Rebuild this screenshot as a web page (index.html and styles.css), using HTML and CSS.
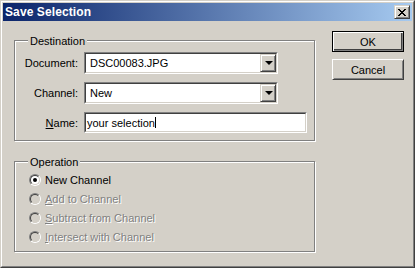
FILE: index.html
```html
<!DOCTYPE html>
<html lang="en">
<head>
    <meta charset="UTF-8">
    <title>Save Selection</title>
    <link rel="stylesheet" href="styles.css">
</head>
<body>
    <div class="window">
        <div class="frame">
            <div class="titlebar">
                <span class="title">Save Selection</span>
                <span class="close-btn">
                    <svg width="8" height="7" viewBox="0 0 8 7">
                        <path d="M0 0h2v1H0z M6 0h2v1H6z M1 1h2v1H1z M5 1h2v1H5z M2 2h4v1H2z M3 3h2v1H3z M2 4h4v1H2z M1 5h2v1H1z M5 5h2v1H5z M0 6h2v1H0z M6 6h2v1H6z" fill="#000"/>
                    </svg>
                </span>
            </div>

            <div class="dialog">
                <div class="groups">
                    <div class="group group-dest">
                        <span class="legend">Destination</span>
                        <div class="form-grid">
                            <span class="field-label">Document:</span>
                            <div class="combo">
                                <div class="combo-inner">
                                    <span class="combo-text">DSC00083.JPG</span>
                                    <span class="combo-btn"><span class="arrow"></span></span>
                                </div>
                            </div>

                            <span class="field-label">Channel:</span>
                            <div class="combo">
                                <div class="combo-inner">
                                    <span class="combo-text">New</span>
                                    <span class="combo-btn"><span class="arrow"></span></span>
                                </div>
                            </div>

                            <span class="field-label"><u>N</u>ame:</span>
                            <div class="edit">
                                <div class="edit-inner">
                                    <span class="edit-text">your selection</span><span class="caret"></span>
                                </div>
                            </div>
                        </div>
                    </div>

                    <div class="group group-op">
                        <span class="legend">Operation</span>
                        <div class="radio-row">
                            <span class="radio"><span class="radio-inner"><span class="radio-dot"></span></span></span>
                            <span class="radio-label">New Channel</span>
                        </div>
                        <div class="radio-row disabled">
                            <span class="radio"><span class="radio-inner"></span></span>
                            <span class="radio-label"><u>A</u>dd to Channel</span>
                        </div>
                        <div class="radio-row disabled">
                            <span class="radio"><span class="radio-inner"></span></span>
                            <span class="radio-label"><u>S</u>ubtract from Channel</span>
                        </div>
                        <div class="radio-row disabled">
                            <span class="radio"><span class="radio-inner"></span></span>
                            <span class="radio-label"><u>I</u>ntersect with Channel</span>
                        </div>
                    </div>
                </div>

                <div class="buttons">
                    <div class="btn btn-default">OK</div>
                    <div class="btn">Cancel</div>
                </div>
            </div>
        </div>
    </div>
</body>
</html>
```

FILE: styles.css
```css
body {
    margin: 0;
    background-color: #d4d0c8;
    font-family: "Liberation Sans", Arial, sans-serif;
    font-size: 11px;
    color: #000;
}

.window {
    width: 415px;
    height: 268px;
    box-sizing: border-box;
    border: 1px solid;
    border-color: #d4d0c8 #404040 #404040 #d4d0c8;
}

.frame {
    height: 100%;
    box-sizing: border-box;
    border: 1px solid;
    border-color: #fff #808080 #808080 #fff;
    padding: 1px;
}

/* title bar */
.titlebar {
    height: 18px;
    display: flex;
    align-items: center;
    justify-content: space-between;
    padding: 0 2px;
    background: linear-gradient(to right, #0a246a, #a6caf0);
}

.title {
    color: #fff;
    font-weight: bold;
    font-size: 12px;
    letter-spacing: 0.1px;
}

.close-btn {
    width: 16px;
    height: 14px;
    box-sizing: border-box;
    display: flex;
    align-items: center;
    justify-content: center;
    background: #d4d0c8;
    border: 1px solid;
    border-color: #d4d0c8 #404040 #404040 #d4d0c8;
    box-shadow: inset 1px 1px #fff, inset -1px -1px #808080;
}

.close-btn svg {
    display: block;
}

/* dialog body */
.dialog {
    display: flex;
    padding: 10px 0 0 11px;
}

.groups {
    padding-top: 9px;
}

.group {
    position: relative;
    width: 301px;
    box-sizing: border-box;
    border: 1px solid #808080;
    box-shadow: 1px 1px 0 #fff, inset 1px 1px 0 #fff;
}

.group-dest {
    height: 101px;
    padding-top: 11px;
    margin-bottom: 20px;
}

.group-op {
    height: 91px;
    padding: 8px 0 0 14px;
}

.legend {
    position: absolute;
    top: -6px;
    left: 13px;
    padding: 0 2px;
    line-height: 13px;
    background: #d4d0c8;
}

.form-grid {
    display: grid;
    grid-template-columns: 63px auto;
    column-gap: 6px;
    row-gap: 8px;
    align-items: center;
}

.field-label {
    text-align: right;
}

.combo {
    width: 194px;
    height: 22px;
    box-sizing: border-box;
    border: 1px solid;
    border-color: #808080 #fff #fff #808080;
}

.combo-inner,
.edit-inner {
    height: 100%;
    box-sizing: border-box;
    display: flex;
    align-items: center;
    background: #fff;
    border: 1px solid;
    border-color: #404040 #d4d0c8 #d4d0c8 #404040;
}

.combo-text {
    flex: 1;
    padding-left: 4px;
}

.combo-btn {
    width: 16px;
    height: 100%;
    box-sizing: border-box;
    display: flex;
    align-items: center;
    justify-content: center;
    background: #d4d0c8;
    border: 1px solid;
    border-color: #d4d0c8 #404040 #404040 #d4d0c8;
    box-shadow: inset 1px 1px #fff, inset -1px -1px #808080;
}

.arrow {
    width: 0;
    height: 0;
    border-left: 4px solid transparent;
    border-right: 4px solid transparent;
    border-top: 4px solid #000;
    margin-left: 1px;
}

.edit {
    width: 223px;
    height: 21px;
    box-sizing: border-box;
    border: 1px solid;
    border-color: #808080 #fff #fff #808080;
}

.edit-text {
    padding-left: 1px;
}

.caret {
    width: 1px;
    height: 11px;
    background: #000;
}

/* radios */
.radio-row {
    height: 19px;
    display: flex;
    align-items: center;
    gap: 4px;
}

.radio {
    width: 12px;
    height: 12px;
    box-sizing: border-box;
    border-radius: 50%;
    border: 1px solid;
    border-color: #808080 #fff #fff #808080;
}

.radio-inner {
    width: 10px;
    height: 10px;
    box-sizing: border-box;
    display: flex;
    align-items: center;
    justify-content: center;
    border-radius: 50%;
    border: 1px solid;
    border-color: #404040 #d4d0c8 #d4d0c8 #404040;
    background: #fff;
}

.radio-dot {
    width: 4px;
    height: 4px;
    border-radius: 50%;
    background: #000;
}

.disabled .radio-inner {
    background: #d4d0c8;
}

.disabled .radio-label {
    color: #808080;
    text-shadow: 1px 1px 0 #fff;
}

/* buttons */
.buttons {
    margin-left: 17px;
    display: flex;
    flex-direction: column;
    gap: 7px;
}

.btn {
    width: 72px;
    height: 21px;
    box-sizing: border-box;
    display: flex;
    align-items: center;
    justify-content: center;
    border: 1px solid;
    border-color: #fff #404040 #404040 #fff;
    box-shadow: inset 1px 1px #d4d0c8, inset -1px -1px #808080;
}

.btn-default {
    border-color: #000;
    box-shadow: inset 1px 1px #fff, inset -1px -1px #808080, inset -2px -2px #404040;
}
```
